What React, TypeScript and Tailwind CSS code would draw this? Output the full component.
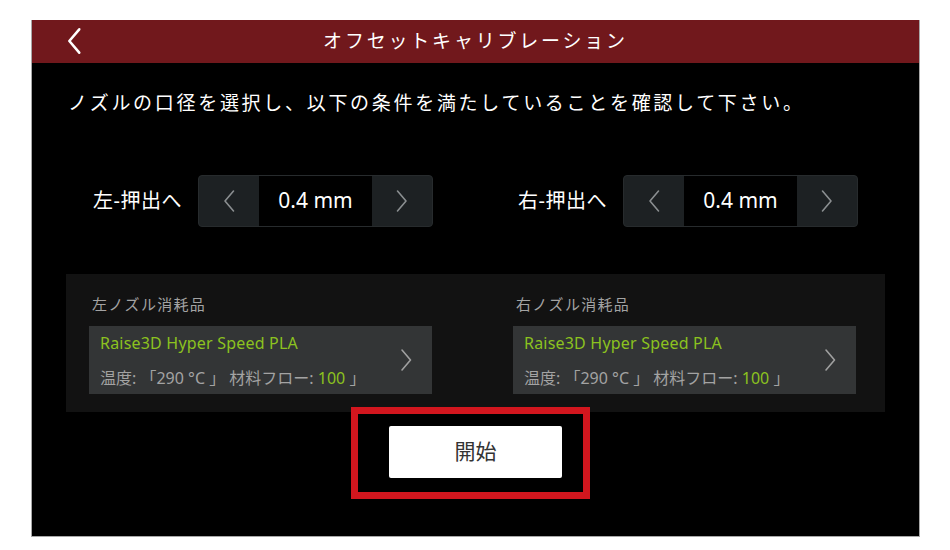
import React from "react";

const font = { fontFamily: '"Noto Sans", "Noto Sans CJK JP", sans-serif' };

function Chevron({ dir, className, sw = 1.6 }: { dir: "left" | "right"; className?: string; sw?: number }) {
  return (
    <svg viewBox="0 0 12 24" className={className} fill="none" stroke="currentColor" strokeWidth={sw} strokeLinecap="round" strokeLinejoin="round">
      {dir === "left" ? <path d="M10.5 2 L2 12 L10.5 22" /> : <path d="M1.5 2 L10 12 L1.5 22" />}
    </svg>
  );
}

function Stepper({ label }: { label: string }) {
  return (
    <div className="flex items-center">
      <span className="text-[20px] text-white w-[105px] tracking-[0.5px]">{label}</span>
      <div className="flex h-[52px] w-[235px] rounded-[4px] bg-[#1d2123] border border-[#272b2d] overflow-hidden">
        <div className="w-[60px] flex items-center justify-center text-[#8a8e90]">
          <Chevron dir="left" className="w-[12px] h-[24px]" />
        </div>
        <div className="flex-1 bg-black flex items-center justify-center text-white text-[21px]">0.4 mm</div>
        <div className="w-[60px] flex items-center justify-center text-[#8a8e90]">
          <Chevron dir="right" className="w-[12px] h-[24px]" />
        </div>
      </div>
    </div>
  );
}

function Consumable({ title }: { title: string }) {
  return (
    <div className="flex flex-col">
      <div className="text-[15px] text-[#a3a3a3] h-[20px] leading-[20px] tracking-[1.3px] ml-[3px]">{title}</div>
      <div className="mt-[12px] h-[68px] w-[343px] bg-[#333536] flex items-center pl-[11px] pr-[19px]">
        <div className="flex-1 flex flex-col">
          <span className="text-[16px] text-[#8cc21f] leading-[20px] tracking-[0.2px]">Raise3D Hyper Speed PLA</span>
          <span className="text-[16px] text-[#a3a3a3] leading-[20px] mt-[15px] whitespace-pre">
            {"温度: 「290 °C 」 材料フロー: "}<span className="text-[#8cc21f]">100</span>{" 」"}
          </span>
        </div>
        <Chevron dir="right" className="w-[13px] h-[24px] text-[#a0a0a0]" />
      </div>
    </div>
  );
}

export default function App() {
  return (
    <div className="w-[950px] h-[550px] bg-white relative" style={font}>
      <div className="absolute left-[31px] top-[20px] w-[889px] h-[517px] bg-black border-x border-b border-[#a8a8a8] flex flex-col">
        <div className="h-[43px] bg-[#71181c] flex items-center relative">
          <div className="absolute left-[34px] top-[7px] text-white">
            <Chevron dir="left" className="w-[16px] h-[28px]" sw={2.2} />
          </div>
          <div className="flex-1 text-center text-white text-[19px] tracking-[2.8px] leading-[43px]">オフセットキャリブレーション</div>
        </div>
        <div className="pl-[36px] pt-[27px] text-white text-[19px] tracking-[2.7px] leading-[26px]">
          ノズルの口径を選択し、以下の条件を満たしていることを確認して下さい。
        </div>
        <div className="flex mt-[59px] pl-[61px] gap-[85px]">
          <Stepper label="左-押出へ" />
          <Stepper label="右-押出へ" />
        </div>
        <div className="mt-[47px] mx-[34px] h-[138px] bg-[#121212] flex pl-[23px] pt-[20px] gap-[81px]">
          <Consumable title="左ノズル消耗品" />
          <Consumable title="右ノズル消耗品" />
        </div>
        <div className="flex justify-center mt-[14px]">
          <div className="w-[173px] h-[52px] bg-white rounded-[2px] flex items-center justify-center text-[21px] text-[#333]">
            開始
          </div>
        </div>
        <div className="absolute left-[319px] top-[387px] w-[239px] h-[92px] border-[7px] border-[#d2161e]" />
      </div>
    </div>
  );
}
